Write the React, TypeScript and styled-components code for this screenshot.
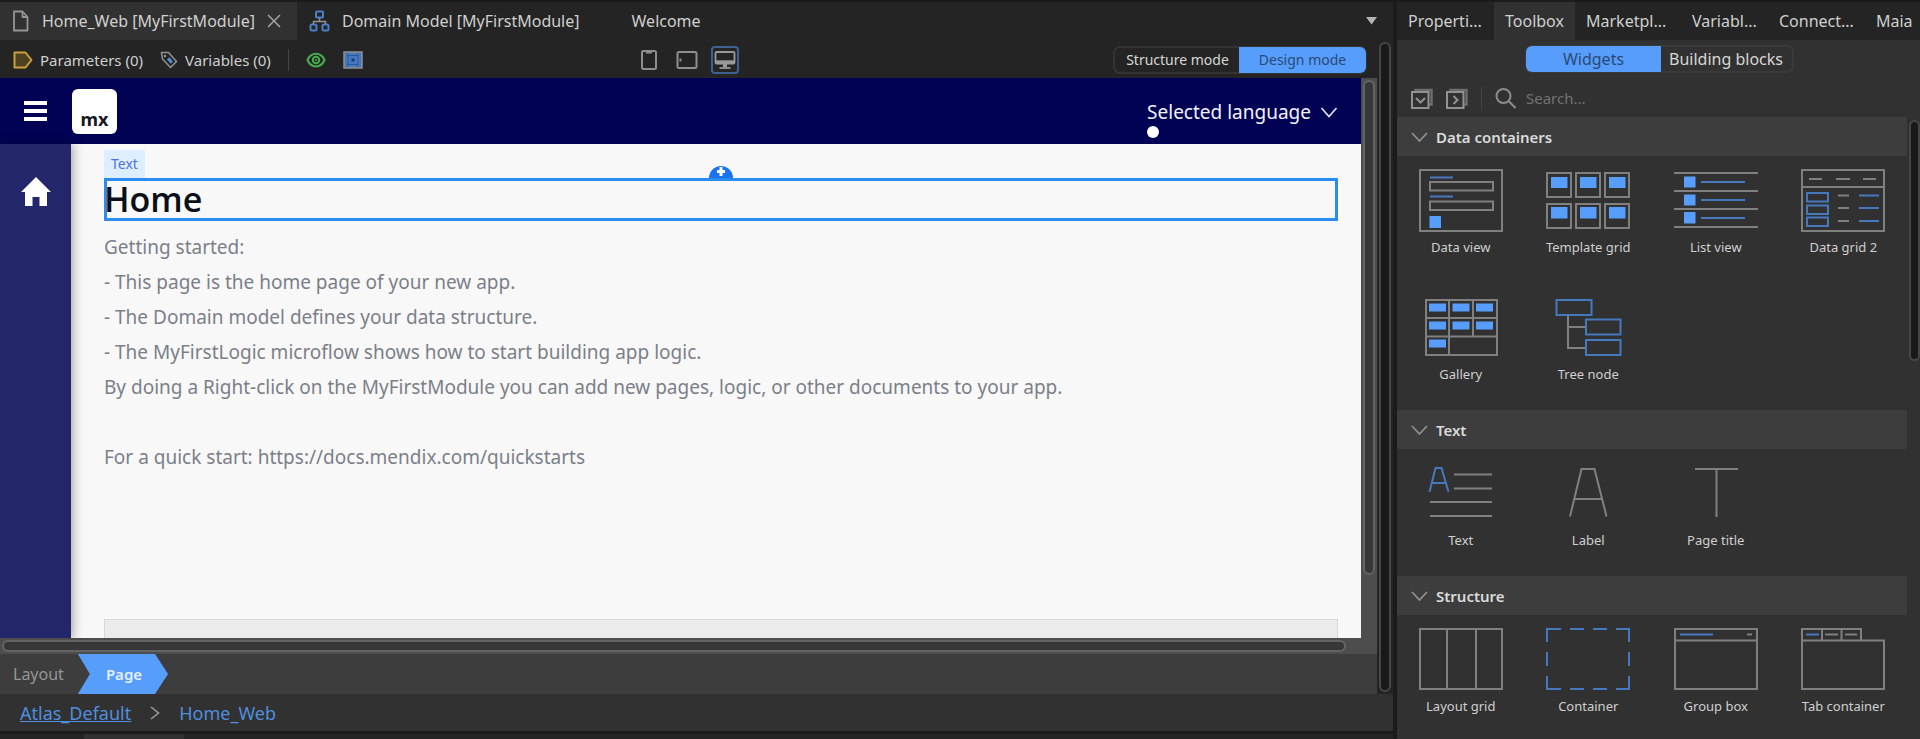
import React from "react";
import styled, { createGlobalStyle, css } from "styled-components";

const ui = `"Noto Sans", "Open Sans", sans-serif`;
const line = "#808080";
const blue = "#579dfb";
const edge = "#4678bd";

const GlobalStyle = createGlobalStyle`
  *, *::before, *::after { box-sizing: border-box; }
  body { margin: 0; background: #242424; font-family: ${ui}; color: #cfcfcf; }
  button { font: inherit; color: inherit; background: none; border: 0; padding: 0; white-space: nowrap; }
  svg { display: block; flex: none; }
`;

const Studio = styled.div`
  display: flex;
  height: 100vh;
  overflow: hidden;
`;

const EditorPane = styled.div`
  flex: 1;
  min-width: 0;
  display: flex;
  flex-direction: column;
  border-right: 4px solid #1b1b1b;
`;

const DocumentTabs = styled.div`
  display: flex;
  flex: none;
  height: 40px;
  border-top: 2px solid #1b1b1b;
  background: #242424;
`;

const DocumentTab = styled.div<{ $active?: boolean }>`
  display: flex;
  align-items: center;
  gap: 12px;
  padding: 0 12px;
  font-size: 16px;
  line-height: 24px;
  ${(p) =>
    p.$active &&
    css`
      padding-right: 16px;
      background: #313131;
    `}
`;

const WelcomeTab = styled(DocumentTab)`
  padding-left: 40px;
`;

const TabMenu = styled.button`
  margin-left: auto;
  width: 44px;
  display: grid;
  place-items: center;
`;

const EditorBody = styled.div`
  flex: 1;
  min-height: 0;
  display: flex;
`;

const Editor = styled.div`
  flex: 1;
  min-width: 0;
  display: flex;
  flex-direction: column;
`;

const OuterScroll = styled.div`
  width: 16px;
  padding: 2px;
  background: #242424;
`;

const Thumb = styled.div<{ $length?: string; $dark?: boolean }>`
  height: ${(p) => p.$length ?? "100%"};
  border-radius: 6px;
  border: 2px solid ${(p) => (p.$dark ? "#464646" : "#646464")};
  background: ${(p) => (p.$dark ? "#191919" : "#373737")};
`;

const Toolbar = styled.div`
  flex: none;
  height: 38px;
  display: grid;
  grid-template-columns: 1fr auto 1fr;
  align-items: center;
  padding: 1px 10px 0 13px;
  background: #242424;
  font-size: 15px;
  line-height: 24px;
`;

const ToolGroup = styled.div<{ $end?: boolean }>`
  display: flex;
  align-items: center;
  gap: 17px;
  justify-content: ${(p) => (p.$end ? "flex-end" : "flex-start")};
`;

const DeviceGroup = styled(ToolGroup)`
  gap: 10px;
  padding-right: 6px;
`;

const ToolButton = styled.button`
  display: flex;
  align-items: center;
  gap: 7px;
`;

const Rule = styled.span`
  width: 1px;
  height: 22px;
  background: #444;
`;

const DeviceButton = styled.button<{ $active?: boolean }>`
  width: 28px;
  height: 28px;
  display: grid;
  place-items: center;
  border: 2px solid ${(p) => (p.$active ? "#3f6191" : "transparent")};
  border-radius: 4px;
`;

const Segments = styled.div<{ $left: number; $right: number }>`
  display: grid;
  grid-template-columns: ${(p) => p.$left}px ${(p) => p.$right}px;
  height: 28px;
  border: 2px solid #343434;
  border-radius: 7px;
`;

const PaneSegments = styled(Segments)`
  border-color: #3a3a3a;
`;

const Segment = styled.button<{ $active?: boolean; $size: number }>`
  font-size: ${(p) => p.$size}px;
  line-height: 24px;
  text-align: center;
  color: #d6d6d6;
  ${(p) =>
    p.$active &&
    css`
      background: ${blue};
      color: #2a4a78;
      margin: -1px;
      border-radius: 6px 0 0 6px;
      &:last-child { border-radius: 0 6px 6px 0; }
    `}
`;

const Canvas = styled.div`
  flex: 1;
  min-height: 0;
  display: grid;
  grid-template-columns: 1fr 16px;
  grid-template-rows: 1fr 16px;
  background: #4d4d4d;
`;

const Preview = styled.div`
  min-height: 0;
  display: flex;
  flex-direction: column;
  overflow: hidden;
`;

const VerticalTrack = styled.div`
  padding: 2px;
`;

const HorizontalTrack = styled.div`
  padding: 2px 15px 2px 2px;
`;

const AppHeader = styled.header`
  flex: none;
  height: 66px;
  display: flex;
  align-items: center;
  padding: 0 23px 0 24px;
  background: #020255;
  color: #f2f2fa;
`;

const Logo = styled.div`
  width: 45px;
  height: 45px;
  margin-left: 25px;
  padding-top: 18px;
  border-radius: 6px;
  background: #fff;
  color: #17171f;
  font-size: 18px;
  line-height: 24px;
  font-weight: 700;
  text-align: center;
`;

const Language = styled.div`
  margin-left: auto;
  padding-top: 20px;
`;

const LanguageButton = styled.button`
  display: flex;
  align-items: center;
  gap: 9px;
  font-size: 19px;
  line-height: 28px;
`;

const LanguageDot = styled.span`
  display: block;
  width: 12px;
  height: 12px;
  margin-bottom: 6px;
  border-radius: 50%;
  background: #fff;
`;

const AppBody = styled.div`
  flex: 1;
  min-height: 0;
  display: flex;
  background: #f8f8f8;
`;

const AppNav = styled.nav`
  width: 71px;
  flex: none;
  padding: 33px 21px;
  background: #24266b;
  box-shadow: 2px 0 10px rgba(0, 0, 0, 0.35);
`;

const PageContent = styled.main`
  flex: 1;
  min-width: 0;
  display: flex;
  flex-direction: column;
  padding: 6px 23px 0 33px;
`;

const WidgetTag = styled.span`
  align-self: flex-start;
  padding: 0 7px;
  background: #dfeefe;
  color: #4b74e0;
  font-size: 14px;
  line-height: 28px;
`;

const HeadingBox = styled.div`
  position: relative;
  box-shadow: inset 0 0 0 3px #2a8cf0;
`;

const Heading = styled.h1`
  margin: 0;
  font-family: "Open Sans", "Noto Sans", sans-serif;
  font-size: 34px;
  line-height: 43px;
  font-weight: 600;
  color: #0a0e17;
`;

const InsertMark = styled.button`
  position: absolute;
  left: 50%;
  bottom: 100%;
  width: 24px;
  height: 12px;
  margin-left: -12px;
  border-radius: 12px 12px 0 0;
  background: #1a73ef;
  display: grid;
  place-items: center;
`;

const Intro = styled.p`
  margin: 9px 0 144px;
  font-size: 19px;
  line-height: 35px;
  color: #7b7f89;
  white-space: pre-line;
`;

const Placeholder = styled.div`
  flex: 1;
  border: 1px solid #d8d8d8;
  border-bottom: 0;
  background: #ebebeb;
`;

const LayerBar = styled.div`
  flex: none;
  display: flex;
  height: 40px;
  background: #3d3d3d;
`;

const LayerButton = styled.button<{ $active?: boolean }>`
  padding: 0 14px 0 13px;
  font-size: 16px;
  line-height: 40px;
  color: #969696;
  ${(p) =>
    p.$active &&
    css`
      padding: 0 26px 0 28px;
      font-size: 15px;
      font-weight: 600;
      color: #e4efff;
      background: ${blue};
      clip-path: polygon(0 0, calc(100% - 13px) 0, 100% 50%, calc(100% - 13px) 100%, 0 100%, 12px 50%);
    `}
`;

const Breadcrumb = styled.nav`
  flex: none;
  height: 37px;
  display: flex;
  align-items: center;
  gap: 19px;
  padding-left: 20px;
  background: #313131;
  font-size: 18px;
  line-height: 24px;
`;

const Crumb = styled.a<{ $plain?: boolean }>`
  color: #4f8edf;
  text-decoration: ${(p) => (p.$plain ? "none" : "underline")};
`;

const BottomDock = styled.div`
  flex: none;
  height: 8px;
  padding-left: 84px;
  border-top: 3px solid #1b1b1b;
  background: #242424;
`;

const DockTab = styled.div`
  width: 100px;
  height: 5px;
  background: #313131;
`;

const SidePane = styled.aside`
  width: 523px;
  flex: none;
  display: flex;
  flex-direction: column;
  background: #313131;
`;

const PaneTabs = styled.div`
  flex: none;
  height: 40px;
  display: grid;
  grid-template-columns: 97fr 81fr 106fr 87fr 97fr 55fr;
  border-top: 2px solid #1b1b1b;
  background: #242424;
`;

const PaneTab = styled.button<{ $active?: boolean }>`
  padding-left: 11px;
  text-align: left;
  font-size: 16px;
  line-height: 38px;
  background: ${(p) => (p.$active ? "#313131" : "transparent")};
`;

const PaneSwitch = styled.div`
  flex: none;
  display: flex;
  justify-content: center;
  padding: 5px 0 0 2px;
`;

const SearchRow = styled.div`
  flex: none;
  height: 44px;
  display: flex;
  align-items: center;
  gap: 13px;
  padding: 6px 14px 0;
`;

const SearchField = styled.label`
  flex: 1;
  display: flex;
  align-items: center;
  gap: 10px;
`;

const SearchInput = styled.input`
  flex: 1;
  min-width: 0;
  padding: 0;
  border: 0;
  outline: 0;
  background: none;
  color: #cfcfcf;
  font: 15px/24px ${ui};
  &::placeholder { color: #727272; opacity: 1; }
`;

const ToolboxBody = styled.div`
  flex: 1;
  min-height: 0;
  display: flex;
`;

const Sections = styled.div`
  flex: 1;
  min-width: 0;
  overflow: hidden;
`;

const ToolboxScroll = styled.div`
  width: 13px;
  padding: 3px 0 0 2px;
`;

const SectionHeader = styled.button`
  width: 100%;
  height: 39px;
  display: flex;
  align-items: center;
  gap: 8px;
  padding: 0 14px;
  background: #3d3d3d;
  font-size: 15px;
  line-height: 24px;
  font-weight: 600;
  color: #dadada;
`;

const WidgetGrid = styled.div`
  display: grid;
  grid-template-columns: repeat(4, 1fr);
`;

const Widget = styled.button`
  height: 127px;
  display: flex;
  flex-direction: column;
  align-items: center;
  gap: 5px;
  padding-top: 13px;
  font-size: 13px;
  line-height: 20px;
`;

const Chevron = () => (
  <svg width="17" height="12" viewBox="0 0 17 12" fill="none" stroke="#8f8f8f" strokeWidth="1.800">
    <path d="M1 2l7.500 8L16 2" />
  </svg>
);

const FileIcon = () => (
  <svg width="18" height="22" viewBox="0 0 18 22" fill="none" stroke="#959595" strokeWidth="1.800">
    <path d="M2 1.500h8.500l5 5.500v13.500H2zM10.500 1.500V7h5" strokeLinejoin="round" />
  </svg>
);

const CloseIcon = () => (
  <svg width="14" height="14" viewBox="0 0 14 14" stroke="#a4a4a4" strokeWidth="1.500">
    <path d="M1 1l12 12M13 1L1 13" />
  </svg>
);

const DomainIcon = () => (
  <svg width="21" height="22" viewBox="0 0 21 22" fill="none" strokeWidth="2">
    <path d="M10.500 8v3.500M4.500 14v-2.500h12V14" stroke="#909090" strokeWidth="1.500" />
    <g stroke="#4b7fc6">
      <rect x="7" y="1.500" width="7" height="6" rx="1" />
      <rect x="1.500" y="14.500" width="6" height="6" rx="1.500" />
      <rect x="13.500" y="14.500" width="6" height="6" rx="1.500" />
    </g>
  </svg>
);

const ParameterIcon = () => (
  <svg width="20" height="18" viewBox="0 0 20 18">
    <path d="M1.500 1.500h11L18.500 9l-6 7.500h-11z" fill="#4d4122" stroke="#c9a13c" strokeWidth="2" strokeLinejoin="round" />
  </svg>
);

const TagIcon = () => (
  <svg width="18" height="18" viewBox="0 0 18 18" fill="none">
    <path d="M1.500 1.500h7l8 9-6 6-8-8.500z" stroke="#8e8e8e" strokeWidth="1.600" strokeLinejoin="round" />
    <circle cx="5" cy="5" r="1.200" fill="#9a9a9a" />
    <path d="M7 8.500l2.200-2.200 3.800 4.200-2.200 2.200z" fill="#4f8edf" />
  </svg>
);

const EyeIcon = () => (
  <svg width="20" height="16" viewBox="0 0 20 16" fill="none" stroke="#46ad4c" strokeWidth="2">
    <path d="M1.500 8C5-.5 15-.5 18.500 8 15 16.500 5 16.500 1.500 8z" />
    <circle cx="10" cy="8" r="3.200" />
    <circle cx="10" cy="8" r="1" fill="#46ad4c" stroke="none" />
  </svg>
);

const FrameIcon = () => (
  <svg width="20" height="18" viewBox="0 0 20 18" fill="none">
    <rect x="1" y="1" width="18" height="16" fill="#4478c0" stroke="#8e8e8e" strokeWidth="1.500" />
    <rect x="5" y="4.500" width="10" height="9" stroke="#2f5896" />
    <path d="M4 4h2M14 4h2M4 14h2M14 14h2" stroke="#2f5896" />
    <rect x="8.500" y="7.500" width="3" height="3" fill="#1d3b6a" />
  </svg>
);

const PhoneIcon = () => (
  <svg width="16" height="20" viewBox="0 0 16 20" fill="none" stroke="#8e8e8e" strokeWidth="2">
    <rect x="1" y="1" width="14" height="18" rx="1.500" />
    <path d="M5 2.500h6" strokeWidth="2" />
  </svg>
);

const TabletIcon = () => (
  <svg width="22" height="18" viewBox="0 0 22 18" fill="none" stroke="#8e8e8e" strokeWidth="2">
    <rect x="1.500" y="1" width="19" height="16" rx="1.500" />
    <path d="M4.500 7.500v3" strokeWidth="2" />
  </svg>
);

const MonitorIcon = () => (
  <svg width="22" height="18" viewBox="0 0 22 18" fill="none" stroke="#999" strokeWidth="1.800">
    <rect x="1.500" y="1" width="19" height="11.500" rx="1" />
    <path d="M1.500 10.800h19" strokeWidth="3" />
    <path d="M11 12v4" strokeWidth="4" />
    <path d="M5.500 17h11" />
  </svg>
);

const StackIcon = ({ d }: { d: string }) => (
  <svg width="22" height="21" viewBox="0 0 22 21" fill="none" stroke="#929292" strokeWidth="2">
    <path d="M4.500 4V2h16v14.500H18" stroke="#6c6c6c" strokeWidth="2.500" />
    <rect x="1" y="4" width="16.500" height="16" fill="#313131" />
    <path d={d} />
  </svg>
);

const SearchIcon = () => (
  <svg width="21" height="21" viewBox="0 0 21 21" fill="none" stroke="#8c8c8c" strokeWidth="2">
    <circle cx="8.500" cy="8" r="7" />
    <path d="M13.500 13l7 7" />
  </svg>
);

const art: Record<string, React.ReactNode> = {
  "Data view": (
    <>
      <path d="M1 1h82v61H1zM11 13h63v8.500H11zM11 32.500h63V41H11z" />
      <path d="M11 8.500h23M11 27.500h23" stroke={edge} />
      <rect x="10.500" y="47" width="11.500" height="12" fill={blue} stroke="none" />
    </>
  ),
  "Template grid": (
    <>
      <path d="M1 4h24v24H1zM30 4h24v24H30zM59 4h24v24H59zM1 35h24v24H1zM30 35h24v24H30zM59 35h24v24H59z" />
      <path d="M5 8h16.500v11H5zM34 8h16.500v11H34zM63 8h16.500v11H63zM5 38h16.500v11.500H5zM34 38h16.500v11.500H34zM63 38h16.500v11.500H63z" fill={blue} stroke="none" />
    </>
  ),
  "List view": (
    <>
      <path d="M0 4h84M0 22h84M0 40h84M0 58h84" />
      <path d="M10 7.500h11.500v11H10zM10 25.500h11.500v11H10zM10 43h11.500v11.500H10z" fill={blue} stroke="none" />
      <path d="M27 13h44M27 31h44M27 49h44" stroke={edge} />
    </>
  ),
  "Data grid 2": (
    <>
      <path d="M1 1h82v61H1zM1 18h82" />
      <path d="M8 10h13M35 10h14M62 10h13M37 26.500h11M37 39h11M37 52h11" />
      <path d="M6 24h21v8.500H6zM6 36.500h21V45H6zM6 48.500h21V57H6zM58 26.500h20M58 39h20M58 52h20" stroke={edge} />
    </>
  ),
  Gallery: (
    <>
      <path d="M7 4h71v55H7zM7 22h71M7 40.500h71M30 4v55M54 4v36.500" />
      <path d="M10 7.500h17v8H10zM33.500 7.500h17v8h-17zM57 7.500h17v8H57zM10 25.500h17v8H10zM33.500 25.500h17v8h-17zM57 25.500h17v8H57zM10 43.500h17v8H10z" fill={blue} stroke="none" />
    </>
  ),
  "Tree node": (
    <>
      <path d="M22 19v33h17M22 31h17" />
      <path d="M10.500 4h35v15h-35zM40 23.500h34.500v15H40zM40 44h34.500v15H40z" stroke={edge} />
    </>
  ),
  Text: (
    <>
      <path d="M10.500 30L16.500 6h6l7 24M13 21h14" stroke={edge} />
      <path d="M35 12.500h38M35 26.500h38M11 40h62M11 54h62" />
    </>
  ),
  Label: <path d="M24 54.500L35.500 7h13L60.500 54.500M28 37h28" />,
  "Page title": <path d="M21 7h43M42.500 7v48" />,
  "Layout grid": <path d="M1 1h82v60H1zM28 1v60M57 1v60" />,
  Container: (
    <path
      d="M1 14V1h14M24 1h14M47 1h14M70 1h13v13M83 24v14M83 48v13H70M61 61H47M38 61H24M15 61H1V48M1 38V24"
      stroke={edge}
    />
  ),
  "Group box": (
    <>
      <path d="M1 1h82v60H1zM1 12.500h82M73 6.500h5" />
      <path d="M6 6.500h33" stroke={edge} />
    </>
  ),
  "Tab container": (
    <>
      <path d="M1 1h59v11.500H1zM21 1v11.500M40.500 1v11.500M1 12.500h82V61H1zM24 6.500h13M44 6.500h12" />
      <path d="M5 6.500h13" stroke={edge} />
    </>
  ),
};

const sections = [
  { title: "Data containers", widgets: ["Data view", "Template grid", "List view", "Data grid 2", "Gallery", "Tree node"] },
  { title: "Text", widgets: ["Text", "Label", "Page title"] },
  { title: "Structure", widgets: ["Layout grid", "Container", "Group box", "Tab container"] },
];

const intro = `Getting started:
- This page is the home page of your new app.
- The Domain model defines your data structure.
- The MyFirstLogic microflow shows how to start building app logic.
By doing a Right-click on the MyFirstModule you can add new pages, logic, or other documents to your app.

For a quick start: https://docs.mendix.com/quickstarts`;

export default function App() {
  return (
    <Studio>
      <GlobalStyle />
      <EditorPane>
        <DocumentTabs>
          <DocumentTab $active>
            <FileIcon />
            Home_Web [MyFirstModule]
            <button aria-label="Close tab"><CloseIcon /></button>
          </DocumentTab>
          <DocumentTab>
            <DomainIcon />
            Domain Model [MyFirstModule]
          </DocumentTab>
          <WelcomeTab>Welcome</WelcomeTab>
          <TabMenu aria-label="Open documents">
            <svg width="11" height="8" viewBox="0 0 11 8"><path d="M0 0h11L5.500 7.500z" fill="#b4b4b4" /></svg>
          </TabMenu>
        </DocumentTabs>

        <EditorBody>
          <Editor>
            <Toolbar>
              <ToolGroup>
                <ToolButton><ParameterIcon />Parameters (0)</ToolButton>
                <ToolButton><TagIcon />Variables (0)</ToolButton>
                <Rule />
                <button aria-label="View"><EyeIcon /></button>
                <button aria-label="Show frame"><FrameIcon /></button>
              </ToolGroup>
              <DeviceGroup>
                <DeviceButton aria-label="Phone"><PhoneIcon /></DeviceButton>
                <DeviceButton aria-label="Tablet"><TabletIcon /></DeviceButton>
                <DeviceButton aria-label="Desktop" $active><MonitorIcon /></DeviceButton>
              </DeviceGroup>
              <ToolGroup $end>
                <Segments $left={125} $right={125}>
                  <Segment $size={14}>Structure mode</Segment>
                  <Segment $size={14} $active>Design mode</Segment>
                </Segments>
              </ToolGroup>
            </Toolbar>

            <Canvas>
              <Preview>
                <AppHeader>
                  <button aria-label="Menu">
                    <svg width="23" height="20" viewBox="0 0 23 20" fill="#fff">
                      <path d="M0 0h23v4H0zM0 8h23v4H0zM0 16h23v4H0z" />
                    </svg>
                  </button>
                  <Logo>mx</Logo>
                  <Language>
                    <LanguageButton>
                      Selected language
                      <svg width="18" height="11" viewBox="0 0 18 11" fill="none" stroke="#e8e8f4" strokeWidth="1.600">
                        <path d="M1.500 1L9 9.500 16.500 1" />
                      </svg>
                    </LanguageButton>
                    <LanguageDot />
                  </Language>
                </AppHeader>
                <AppBody>
                  <AppNav>
                    <svg width="30" height="29" viewBox="0 0 30 29" fill="#fff">
                      <path d="M15 0l15 15h-4v14h-7.500v-9h-7v9H4V15H0z" />
                    </svg>
                  </AppNav>
                  <PageContent>
                    <WidgetTag>Text</WidgetTag>
                    <HeadingBox>
                      <InsertMark aria-label="Insert widget">
                        <svg width="10" height="10" viewBox="0 0 10 10" stroke="#fff" strokeWidth="3">
                          <path d="M5 0v9M1 4.500h8" />
                        </svg>
                      </InsertMark>
                      <Heading>Home</Heading>
                    </HeadingBox>
                    <Intro>{intro}</Intro>
                    <Placeholder />
                  </PageContent>
                </AppBody>
              </Preview>
              <VerticalTrack><Thumb $length="89%" /></VerticalTrack>
              <HorizontalTrack><Thumb /></HorizontalTrack>
            </Canvas>

            <LayerBar>
              <LayerButton>Layout</LayerButton>
              <LayerButton $active>Page</LayerButton>
            </LayerBar>
          </Editor>
          <OuterScroll><Thumb $dark /></OuterScroll>
        </EditorBody>

        <Breadcrumb>
          <Crumb href="#atlas">Atlas_Default</Crumb>
          <svg width="10" height="14" viewBox="0 0 10 14" fill="none" stroke="#9a9a9a" strokeWidth="1.600">
            <path d="M1 1l7.500 6L1 13" />
          </svg>
          <Crumb href="#home" $plain>Home_Web</Crumb>
        </Breadcrumb>
        <BottomDock><DockTab /></BottomDock>
      </EditorPane>

      <SidePane>
        <PaneTabs>
          <PaneTab>Properti...</PaneTab>
          <PaneTab $active>Toolbox</PaneTab>
          <PaneTab>Marketpl...</PaneTab>
          <PaneTab>Variabl...</PaneTab>
          <PaneTab>Connect...</PaneTab>
          <PaneTab>Maia</PaneTab>
        </PaneTabs>
        <PaneSwitch>
          <PaneSegments $left={133} $right={132}>
            <Segment $size={16} $active>Widgets</Segment>
            <Segment $size={16}>Building blocks</Segment>
          </PaneSegments>
        </PaneSwitch>
        <SearchRow>
          <button aria-label="Expand all"><StackIcon d="M5 10l4.500 4.500L14 10" /></button>
          <button aria-label="Collapse all"><StackIcon d="M7.500 8l4 4-4 4" /></button>
          <Rule />
          <SearchField>
            <SearchIcon />
            <SearchInput type="text" placeholder="Search..." aria-label="Search widgets" />
          </SearchField>
        </SearchRow>
        <ToolboxBody>
          <Sections>
            {sections.map((s) => (
              <section key={s.title}>
                <SectionHeader><Chevron />{s.title}</SectionHeader>
                <WidgetGrid>
                  {s.widgets.map((w) => (
                    <Widget key={w}>
                      <svg width="84" height="63" viewBox="0 0 84 63" fill="none" stroke={line} strokeWidth="2">{art[w]}</svg>
                      {w}
                    </Widget>
                  ))}
                </WidgetGrid>
              </section>
            ))}
          </Sections>
          <ToolboxScroll><Thumb $length="39%" $dark /></ToolboxScroll>
        </ToolboxBody>
      </SidePane>
    </Studio>
  );
}
